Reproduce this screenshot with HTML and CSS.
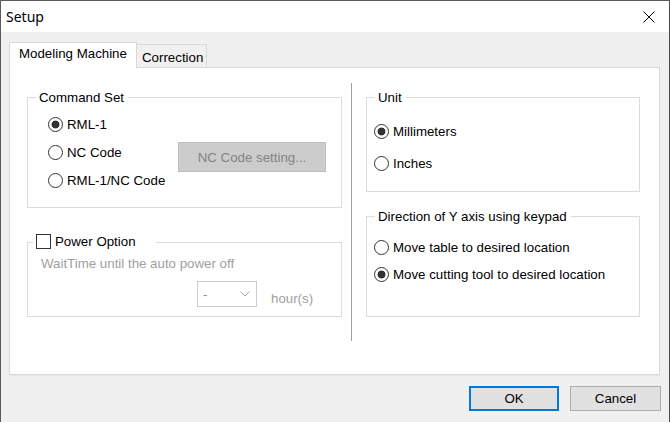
FILE: index.html
```html
<!DOCTYPE html>
<html>
<head>
<meta charset="utf-8">
<link rel="stylesheet" href="styles.css">
</head>
<body>
<div class="window">
  <div class="titlebar">
    <span class="title">Setup</span>
    <svg class="close" width="12" height="12" viewBox="0 0 12 12"><path d="M0.5 0.5 L11.5 11.5 M11.5 0.5 L0.5 11.5" stroke="#000" stroke-width="1" fill="none"/></svg>
  </div>
  <div class="client">
    <div class="tabs">
      <div class="tab active">Modeling Machine</div>
      <div class="tab inactive">Correction</div>
    </div>
    <div class="panel">
      <div class="col left">
        <div class="group cmd">
          <div class="legend">Command Set</div>
          <div class="cmd-body">
            <div class="radios rows28">
              <div class="opt"><span class="radio checked"></span>RML-1</div>
              <div class="opt"><span class="radio"></span>NC Code</div>
              <div class="opt"><span class="radio"></span>RML-1/NC Code</div>
            </div>
            <div class="btn disabled nc">NC Code setting...</div>
          </div>
        </div>
        <div class="group power">
          <div class="legend check-legend"><span class="checkbox"></span>Power Option</div>
          <div class="muted wait">WaitTime until the auto power off</div>
          <div class="combo-row">
            <div class="combo"><span class="dash">-</span><svg width="10" height="6" viewBox="0 0 10 6"><path d="M0.5 0.5 L5 5 L9.5 0.5" stroke="#a6a6a6" stroke-width="1" fill="none"/></svg></div>
            <span class="muted hours">hour(s)</span>
          </div>
        </div>
      </div>
      <div class="separator"></div>
      <div class="col right">
        <div class="group unit">
          <div class="legend">Unit</div>
          <div class="rows32">
            <div class="opt"><span class="radio checked"></span>Millimeters</div>
            <div class="opt"><span class="radio"></span>Inches</div>
          </div>
        </div>
        <div class="group dir">
          <div class="legend">Direction of Y axis using keypad</div>
          <div class="rows27">
            <div class="opt"><span class="radio"></span>Move table to desired location</div>
            <div class="opt"><span class="radio checked"></span>Move cutting tool to desired location</div>
          </div>
        </div>
      </div>
    </div>
    <div class="footer">
      <div class="btn default ok">OK</div>
      <div class="btn cancel">Cancel</div>
    </div>
  </div>
</div>
</body>
</html>
```
FILE: styles.css
```css
html, body {
  margin: 0;
  padding: 0;
}
body {
  width: 670px;
  height: 422px;
  overflow: hidden;
  font-family: "Liberation Sans", Arial, sans-serif;
  font-size: 13.3px;
  line-height: 15px;
  color: #000;
}
.window {
  box-sizing: border-box;
  width: 670px;
  height: 422px;
  border-top: 1px solid #5c5c5c;
  border-left: 1px solid #5c5c5c;
  border-right: 1px solid #4a4a4a;
  background: #f0f0f0;
  display: flex;
  flex-direction: column;
}
.titlebar {
  height: 31px;
  background: #fff;
  display: flex;
  align-items: center;
  padding-left: 5px;
  padding-right: 14px;
}
.title {
  font-family: "Noto Sans", "Open Sans", sans-serif;
  font-size: 14px;
  line-height: 19px;
}
.close {
  margin-left: auto;
  display: block;
}
.client {
  padding: 10px 8px 0 8px;
}
.tabs {
  display: flex;
  align-items: flex-end;
  height: 25px;
}
.tab {
  box-sizing: border-box;
}
.active {
  position: relative;
  z-index: 1;
  width: 128px;
  height: 26px;
  margin-bottom: -1px;
  background: #fff;
  border: 1px solid #d9d9d9;
  border-bottom: none;
  padding: 3px 0 0 9px;
}
.inactive {
  width: 70px;
  height: 23px;
  background: #f0f0f0;
  border-top: 1px solid #d9d9d9;
  border-right: 1px solid #d9d9d9;
  padding: 5px 0 0 5px;
}
.panel {
  box-sizing: border-box;
  width: 651px;
  height: 308px;
  background: #fff;
  border: 1px solid #d9d9d9;
  box-shadow: 0 1px 0 #e6e6e6;
  display: flex;
  align-items: flex-start;
  padding-left: 17px;
}
.col {
  padding-top: 29px;
}
.left {
  width: 315px;
}
.right {
  width: 274px;
  margin-left: 14px;
}
.separator {
  width: 1px;
  height: 258px;
  margin-top: 15px;
  margin-left: 9px;
  background: #a0a0a0;
}
.group {
  box-sizing: border-box;
  border: 1px solid #dcdcdc;
}
.legend {
  display: inline-flex;
  align-items: center;
  height: 15px;
  margin-top: -8px;
  margin-left: 8px;
  padding: 0 4px 0 3px;
  background: #fff;
  vertical-align: top;
}
.group > .legend {
  display: flex;
  width: max-content;
}
.cmd {
  padding: 0 0 13px 20px;
}
.cmd > .legend {
  margin-left: -12px;
}
.cmd-body {
  display: flex;
  align-items: flex-start;
  margin-top: 5px;
}
.radios {
  width: 130px;
}
.opt {
  display: flex;
  align-items: center;
  gap: 4px;
  white-space: nowrap;
}
.rows28 .opt {
  height: 28px;
}
.rows32 {
  margin-top: 10px;
}
.rows32 .opt {
  height: 32px;
}
.rows27 {
  margin-top: 10px;
}
.rows27 .opt {
  height: 27px;
}
.radio {
  box-sizing: border-box;
  width: 15px;
  height: 15px;
  flex: none;
  border: 1px solid #333;
  border-radius: 50%;
  background: #fff;
}
.radio.checked {
  background: radial-gradient(circle, #333 0, #333 3.6px, #fff 4.3px);
}
.checkbox {
  box-sizing: border-box;
  width: 15px;
  height: 15px;
  flex: none;
  border: 1px solid #333;
  background: #fff;
  margin-right: 4px;
}
.btn {
  box-sizing: border-box;
  display: flex;
  align-items: center;
  justify-content: center;
  background: #e1e1e1;
  border: 1px solid #adadad;
}
.nc {
  width: 148px;
  height: 30px;
  margin-top: 32px;
  background: #cccccc;
  border-color: #bfbfbf;
  color: #838383;
}
.power {
  margin-top: 34px;
  padding: 0 0 9px 13px;
}
.power > .legend {
  margin-top: -9px;
  margin-left: -8px;
  padding: 0 20px 0 3px;
}
.muted {
  color: #a0a0a0;
}
.wait {
  margin-top: 7px;
}
.combo-row {
  display: flex;
  align-items: flex-end;
  margin-top: 10px;
  margin-left: 156px;
}
.combo {
  box-sizing: border-box;
  width: 60px;
  height: 26px;
  border: 1px solid #cccccc;
  background: #fff;
  display: flex;
  align-items: center;
  padding: 0 6px 0 5px;
}
.dash {
  color: #8a8a8a;
}
.combo svg {
  margin-left: auto;
  display: block;
}
.hours {
  margin-left: 14px;
  margin-bottom: 1px;
}
.unit {
  padding: 0 0 12px 7px;
}
.unit > .legend,
.dir > .legend {
  margin-left: 1px;
}
.dir {
  margin-top: 24px;
  padding: 0 0 28px 7px;
}
.footer {
  display: flex;
  justify-content: flex-end;
  gap: 11px;
  margin-top: 11px;
}
.ok {
  width: 90px;
  height: 25px;
  border: 1px solid #0078d7;
  box-shadow: inset 0 0 0 1px #0078d7;
}
.cancel {
  width: 91px;
  height: 25px;
}
```
